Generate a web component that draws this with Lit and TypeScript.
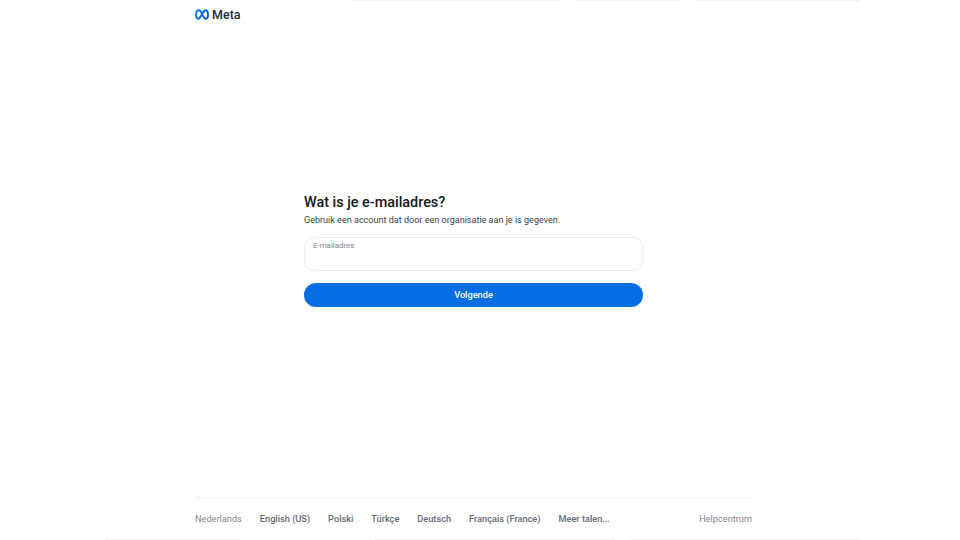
import { LitElement, html, css } from "lit";
import { customElement } from "lit/decorators.js";

@customElement("app-root")
export class AppRoot extends LitElement {
  static styles = css`
    :host { display: block; width: 960px; height: 540px; background: #fff; overflow: hidden; font-family: Roboto, "Noto Sans", sans-serif; color: #1c1e21; }
    .page { height: 540px; display: flex; flex-direction: column; }
    .strip { height: 1px; display: flex; flex: none; }
    .strip i { display: block; height: 1px; background: #f3f3f4; }
    .top { padding-left: 352px; gap: 15px; }
    .bottom { padding-left: 105px; }
    .s1 { width: 208px; }
    .s2 { width: 105px; }
    .s3 { width: 165px; }
    .b1 { width: 135px; margin-right: 135px; }
    .b2 { width: 240px; margin-right: 15px; }
    .b3 { width: 230px; }
    .wrap { width: 557px; margin-left: 195px; flex: 1; display: flex; flex-direction: column; }
    .header { height: 27px; display: flex; align-items: center; gap: 3px; flex: none; }
    .logo { width: 14px; height: 11px; display: block; }
    .word { font-size: 12.5px; font-weight: 500; color: #1c2b33; }
    .main { flex: 1; display: flex; flex-direction: column; padding: 166px 109px 0 109px; }
    h1 { margin: 0; font-size: 14.4px; line-height: 18px; font-weight: 500; color: #14171a; }
    .sub { margin: 1px 0 0; font-size: 9.05px; line-height: 14px; color: #3b4249; white-space: nowrap; }
    .field { margin-top: 10px; height: 34px; box-sizing: border-box; border: 1px solid #e8eaed; border-radius: 10px; padding: 3px 8px; font-size: 7.9px; line-height: 10px; color: #7d858c; background: #fff; }
    .btn { margin-top: 12px; height: 24px; box-sizing: border-box; padding-bottom: 1px; border-radius: 12px; background: #026ee2; color: #fff; font-size: 9.2px; font-weight: 500; display: flex; align-items: center; justify-content: center; }
    .footer { height: 42px; flex: none; border-top: 1px solid #eff0f1; display: flex; align-items: center; justify-content: space-between; font-size: 9.2px; color: #5f6b76; font-weight: 500; box-sizing: border-box; }
    .langs { display: flex; gap: 18px; }
    .muted { font-weight: 400; color: #7f8890; }
  `;

  render() {
    return html`<div class="page">
      <div class="strip top"><i class="s1"></i><i class="s2"></i><i class="s3"></i></div>
      <div class="wrap">
        <div class="header">
          <svg class="logo" viewBox="0 0 28 22" aria-hidden="true">
            <defs>
              <linearGradient id="g" x1="0" y1="0" x2="1" y2="0.6">
                <stop offset="0" stop-color="#0a7cff"></stop>
                <stop offset="1" stop-color="#0358c9"></stop>
              </linearGradient>
            </defs>
            <path d="M14 8.5C11.5 4.5 9.5 2.5 7 2.5C3.8 2.5 2 7 2 12.5C2 16.8 3.6 19.5 6.3 19.5C9 19.5 11 16 14 10.5C17 5 18.7 2.5 21 2.5C24.2 2.5 26 7 26 12.5C26 16.8 24.4 19.5 21.7 19.5C19 19.5 17 16 14 10.5" fill="none" stroke="url(#g)" stroke-width="3.8" stroke-linejoin="round"></path>
          </svg>
          <span class="word">Meta</span>
        </div>
        <div class="main">
          <h1>Wat is je e-mailadres?</h1>
          <p class="sub">Gebruik een account dat door een organisatie aan je is gegeven.</p>
          <div class="field">E-mailadres</div>
          <div class="btn">Volgende</div>
        </div>
        <div class="footer">
          <div class="langs">
            <span class="muted">Nederlands</span>
            <span>English (US)</span>
            <span>Polski</span>
            <span>Türkçe</span>
            <span>Deutsch</span>
            <span>Français (France)</span>
            <span>Meer talen...</span>
          </div>
          <span class="muted">Helpcentrum</span>
        </div>
      </div>
      <div class="strip bottom"><i class="b1"></i><i class="b2"></i><i class="b3"></i></div>
    </div>`;
  }
}
